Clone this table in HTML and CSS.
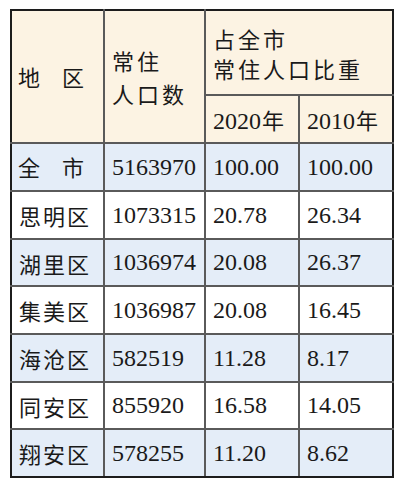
FILE: index.html
```html
<!DOCTYPE html>
<html lang="zh">
<head>
<meta charset="utf-8">
<link rel="stylesheet" href="styles.css">
</head>
<body>
<div class="wrap">
<table class="pop">
  <colgroup>
    <col class="c1"><col class="c2"><col class="c3"><col class="c4">
  </colgroup>
  <thead>
    <tr class="h1">
      <th rowspan="2" class="zh area">地　区</th>
      <th rowspan="2" class="zh two l33">常住<br>人口数</th>
      <th colspan="2" class="zh two l30">占全市<br>常住人口比重</th>
    </tr>
    <tr class="h2">
      <th class="yr">2020<span class="zh">年</span></th>
      <th class="yr">2010<span class="zh">年</span></th>
    </tr>
  </thead>
  <tbody>
    <tr class="blue r48"><td class="zh area">全　市</td><td>5163970</td><td>100.00</td><td>100.00</td></tr>
    <tr class="white r48"><td class="zh">思明区</td><td>1073315</td><td>20.78</td><td>26.34</td></tr>
    <tr class="blue r47"><td class="zh">湖里区</td><td>1036974</td><td>20.08</td><td>26.37</td></tr>
    <tr class="white r48"><td class="zh">集美区</td><td>1036987</td><td>20.08</td><td>16.45</td></tr>
    <tr class="blue r48"><td class="zh">海沧区</td><td>582519</td><td>11.28</td><td>8.17</td></tr>
    <tr class="white r47"><td class="zh">同安区</td><td>855920</td><td>16.58</td><td>14.05</td></tr>
    <tr class="blue r48"><td class="zh">翔安区</td><td>578255</td><td>11.20</td><td>8.62</td></tr>
  </tbody>
</table>
</div>
</body>
</html>
```
FILE: styles.css
```css
html, body {
  margin: 0;
  padding: 0;
  background: #ffffff;
}
.wrap {
  padding: 9px 0 0 10px;
}
.pop {
  border-collapse: collapse;
  table-layout: fixed;
  width: 382px;
  border: 2px solid #1c1c1c;
  font-family: "Liberation Serif", "Noto Sans CJK SC", serif;
  font-size: 24px;
  color: #1a1a1a;
}
.c1 { width: 93px; }
.c2 { width: 101px; }
.c3 { width: 94px; }
.c4 { width: 94px; }
.pop th, .pop td {
  border: 2px solid #5a5a5a;
  padding: 0 0 0 7px;
  text-align: left;
  vertical-align: middle;
  font-weight: normal;
  white-space: nowrap;
  overflow: hidden;
}
.pop thead th {
  background: #fcf3e3;
}
.pop thead tr:first-child th {
  border-top-color: #1c1c1c;
}
.pop th:first-child, .pop td:first-child {
  border-left-color: #1c1c1c;
}
.pop th:last-child, .pop td:last-child {
  border-right-color: #1c1c1c;
}
.pop tbody tr:last-child td {
  border-bottom-color: #1c1c1c;
}
.h1 { height: 85px; }
.h2 { height: 48px; }
.r48 { height: 48px; }
.r47 { height: 47px; }
.blue td { background: #e4edf8; }
.white td { background: #ffffff; }
.zh {
  font-family: "Noto Sans CJK SC", sans-serif;
  font-size: 22px;
  letter-spacing: 2px;
  font-weight: 400;
}
.two {
  letter-spacing: 3px;
}
.l33 { line-height: 33px; padding-bottom: 2px; }
.l30 { line-height: 30px; padding-top: 2px; }
.pop .area { padding-left: 6px; letter-spacing: 0; padding-bottom: 2px; }
.yr { padding-left: 6px; padding-bottom: 3px; }
.yr .zh { letter-spacing: 0; margin-left: 1px; }
```
